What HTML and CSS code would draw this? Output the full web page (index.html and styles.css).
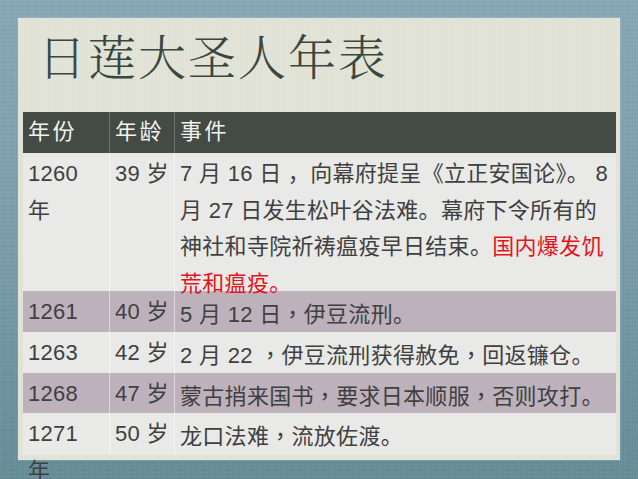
FILE: index.html
```html
<!DOCTYPE html>
<html lang="zh-CN">
<head>
<meta charset="utf-8">
<title>日莲大圣人年表</title>
<link rel="stylesheet" href="styles.css">
</head>
<body>
<div class="paper">
  <h1 class="title">日莲大圣人年表</h1>
  <div class="table">
    <div class="row head">
      <div class="cell">年份</div>
      <div class="cell">年龄</div>
      <div class="cell">事件</div>
    </div>
    <div class="row light tall">
      <div class="cell">1260 年</div>
      <div class="cell">39 岁</div>
      <div class="cell event">7 月 16 日 ，向幕府提呈《立正安国论》。 8<br>月 27 日发生松叶谷法难。幕府下令所有的<br>神社和寺院祈祷瘟疫早日结束。<span class="red">国内爆发饥<br>荒和瘟疫。</span></div>
    </div>
    <div class="row mauve">
      <div class="cell">1261</div>
      <div class="cell">40 岁</div>
      <div class="cell event">5 月 12 日<span class="cm" lang="zh-TW">，</span>伊豆流刑。</div>
    </div>
    <div class="row light">
      <div class="cell">1263</div>
      <div class="cell">42 岁</div>
      <div class="cell event">2 月 22 <span class="cm" lang="zh-TW">，</span>伊豆流刑获得赦免<span class="cm" lang="zh-TW">，</span>回返镰仓。</div>
    </div>
    <div class="row mauve">
      <div class="cell">1268</div>
      <div class="cell">47 岁</div>
      <div class="cell event">蒙古捎来国书<span class="cm" lang="zh-TW">，</span>要求日本顺服<span class="cm" lang="zh-TW">，</span>否则攻打。</div>
    </div>
    <div class="row light">
      <div class="cell">1271 年</div>
      <div class="cell">50 岁</div>
      <div class="cell event">龙口法难<span class="cm" lang="zh-TW">，</span>流放佐渡。</div>
    </div>
  </div>
</div>
</body>
</html>
```
FILE: styles.css
```css
html, body {
  margin: 0;
  padding: 0;
}
body {
  width: 638px;
  height: 479px;
  overflow: hidden;
  background-color: #7599a6;
  background-image:
    repeating-linear-gradient(90deg, rgba(255,255,255,0.05) 0 1px, transparent 1px 3px),
    repeating-linear-gradient(0deg, rgba(0,0,0,0.04) 0 1px, transparent 1px 4px),
    linear-gradient(180deg, #86a8b6 0%, #7b9eab 45%, #668c97 100%);
  font-family: "Liberation Sans", "Noto Sans CJK SC", sans-serif;
  color: #3f403f;
}
.paper {
  box-sizing: border-box;
  margin: 18px 0 0 18px;
  width: 602px;
  height: 442px;
  padding: 0 4px 0 5px;
  background-color: #e3e4d8;
  background-image:
    repeating-linear-gradient(90deg, rgba(0,0,0,0.015) 0 1px, transparent 1px 3px);
  box-shadow: 0 0 1px rgba(255,255,255,0.6);
}
.title {
  margin: 0;
  height: 94px;
  box-sizing: border-box;
  padding: 7px 0 0 15px;
  font-family: "Noto Serif CJK SC", "Noto Sans CJK SC", serif;
  font-weight: 300;
  font-size: 48px;
  line-height: 60px;
  letter-spacing: 2px;
  color: #3b473d;
}
.table {
  display: grid;
  grid-template-columns: 86px 65px 1fr;
  grid-template-rows: 41px 138px 41px 41px 40px 42px;
  font-size: 22px;
  line-height: 36.7px;
  letter-spacing: 0.3px;
}
.row {
  display: contents;
}
.cell {
  box-sizing: border-box;
  min-height: 0;
  padding: 3px 4px 0 5px;
  overflow: visible;
}
.row .cell:first-child {
  padding-right: 14px;
}
.row .cell + .cell {
  border-left: 1px solid rgba(255,255,255,0.45);
}
.row .event {
  white-space: nowrap;
}
.head .cell {
  background: #434b44;
  color: #f2f2ee;
  letter-spacing: 2.5px;
  padding-top: 2px;
}
.head .cell + .cell {
  border-left: 1px solid #6a726b;
}
.light .cell {
  background: #e9e9e8;
}
.mauve .cell {
  background: #bdb1bc;
}
.tall .cell {
  z-index: 1;
}
.cm {
  font-family: "Noto Sans CJK TC", "Noto Sans CJK SC", sans-serif;
}
.red {
  color: #e3141c;
}
```
